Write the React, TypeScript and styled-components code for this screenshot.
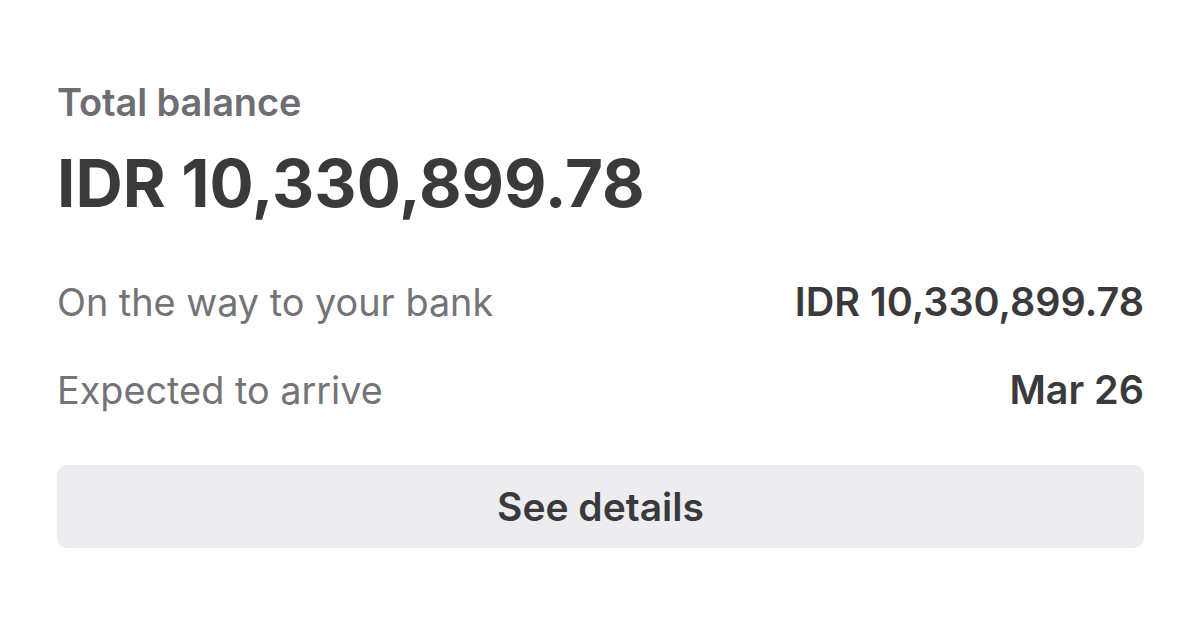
import React from 'react';
import styled, { createGlobalStyle } from 'styled-components';

const GlobalStyle = createGlobalStyle`
  html, body {
    margin: 0;
    padding: 0;
    background: #ffffff;
  }
  body {
    font-family: Inter, "Noto Sans", "Liberation Sans", sans-serif;
    -webkit-font-smoothing: antialiased;
  }
`;

const Card = styled.div`
  width: 1200px;
  height: 636px;
  box-sizing: border-box;
  padding: 78px 56px 0 57px;
  display: flex;
  flex-direction: column;
`;

const Label = styled.div`
  font-size: 38px;
  font-weight: 600;
  color: #6e6e72;
  line-height: 48px;
  letter-spacing: -0.1px;
`;

const Amount = styled.div`
  margin-top: 19px;
  font-size: 65.5px;
  font-weight: 700;
  color: #3a3a3c;
  line-height: 78px;
`;

const Rows = styled.div`
  margin-top: 55px;
  display: flex;
  flex-direction: column;
  gap: 40px;
`;

const Row = styled.div`
  display: flex;
  justify-content: space-between;
  align-items: baseline;
  line-height: 48px;
`;

const RowLabel = styled.span`
  color: #737378;
  font-size: 37.8px;
  font-weight: 400;
`;

const RowValue = styled.span`
  color: #3a3a3c;
  font-size: 39.5px;
  font-weight: 600;
`;

const Button = styled.button`
  margin-top: 51px;
  height: 83px;
  width: 100%;
  border: none;
  border-radius: 10px;
  background: #ededf1;
  color: #3a3a3c;
  font-family: inherit;
  font-size: 39px;
  font-weight: 600;
  cursor: pointer;
`;

export default function App() {
  return (
    <>
      <GlobalStyle />
      <Card>
        <Label>Total balance</Label>
        <Amount>IDR 10,330,899.78</Amount>
        <Rows>
          <Row>
            <RowLabel>On the way to your bank</RowLabel>
            <RowValue>IDR 10,330,899.78</RowValue>
          </Row>
          <Row>
            <RowLabel>Expected to arrive</RowLabel>
            <RowValue>Mar 26</RowValue>
          </Row>
        </Rows>
        <Button>See details</Button>
      </Card>
    </>
  );
}
